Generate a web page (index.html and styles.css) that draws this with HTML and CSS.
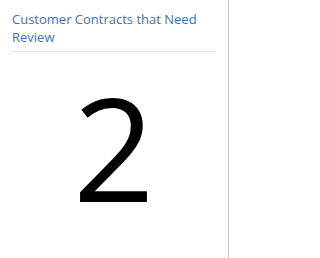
FILE: index.html
```html
<!DOCTYPE html>
<html>
<head>
<meta charset="utf-8">
<link rel="stylesheet" href="styles.css">
</head>
<body>
<div class="tile">
  <div class="tile-header">
    <h2 class="tile-title">Customer Contracts that Need Review</h2>
  </div>
  <div class="tile-body">
    <span class="tile-value">2</span>
  </div>
</div>
</body>
</html>
```
FILE: styles.css
```css
html, body {
  margin: 0;
  padding: 0;
  background: #ffffff;
}
.tile {
  width: 228px;
  height: 258px;
  border-right: 1px solid #c8c8c8;
  font-family: "Open Sans", "Noto Sans", sans-serif;
  display: flex;
  flex-direction: column;
}
.tile-header {
  margin: 0 12px 0 11px;
  padding: 10px 0 5px 1px;
  border-bottom: 1px solid #e2e2e2;
}
.tile-title {
  margin: 0;
  font-size: 13px;
  font-weight: normal;
  line-height: 18px;
  color: #3b73b9;
}
.tile-body {
  display: flex;
  justify-content: center;
}
.tile-value {
  font-size: 143px;
  line-height: 1;
  color: #000;
  margin-top: 23px;
}
```
